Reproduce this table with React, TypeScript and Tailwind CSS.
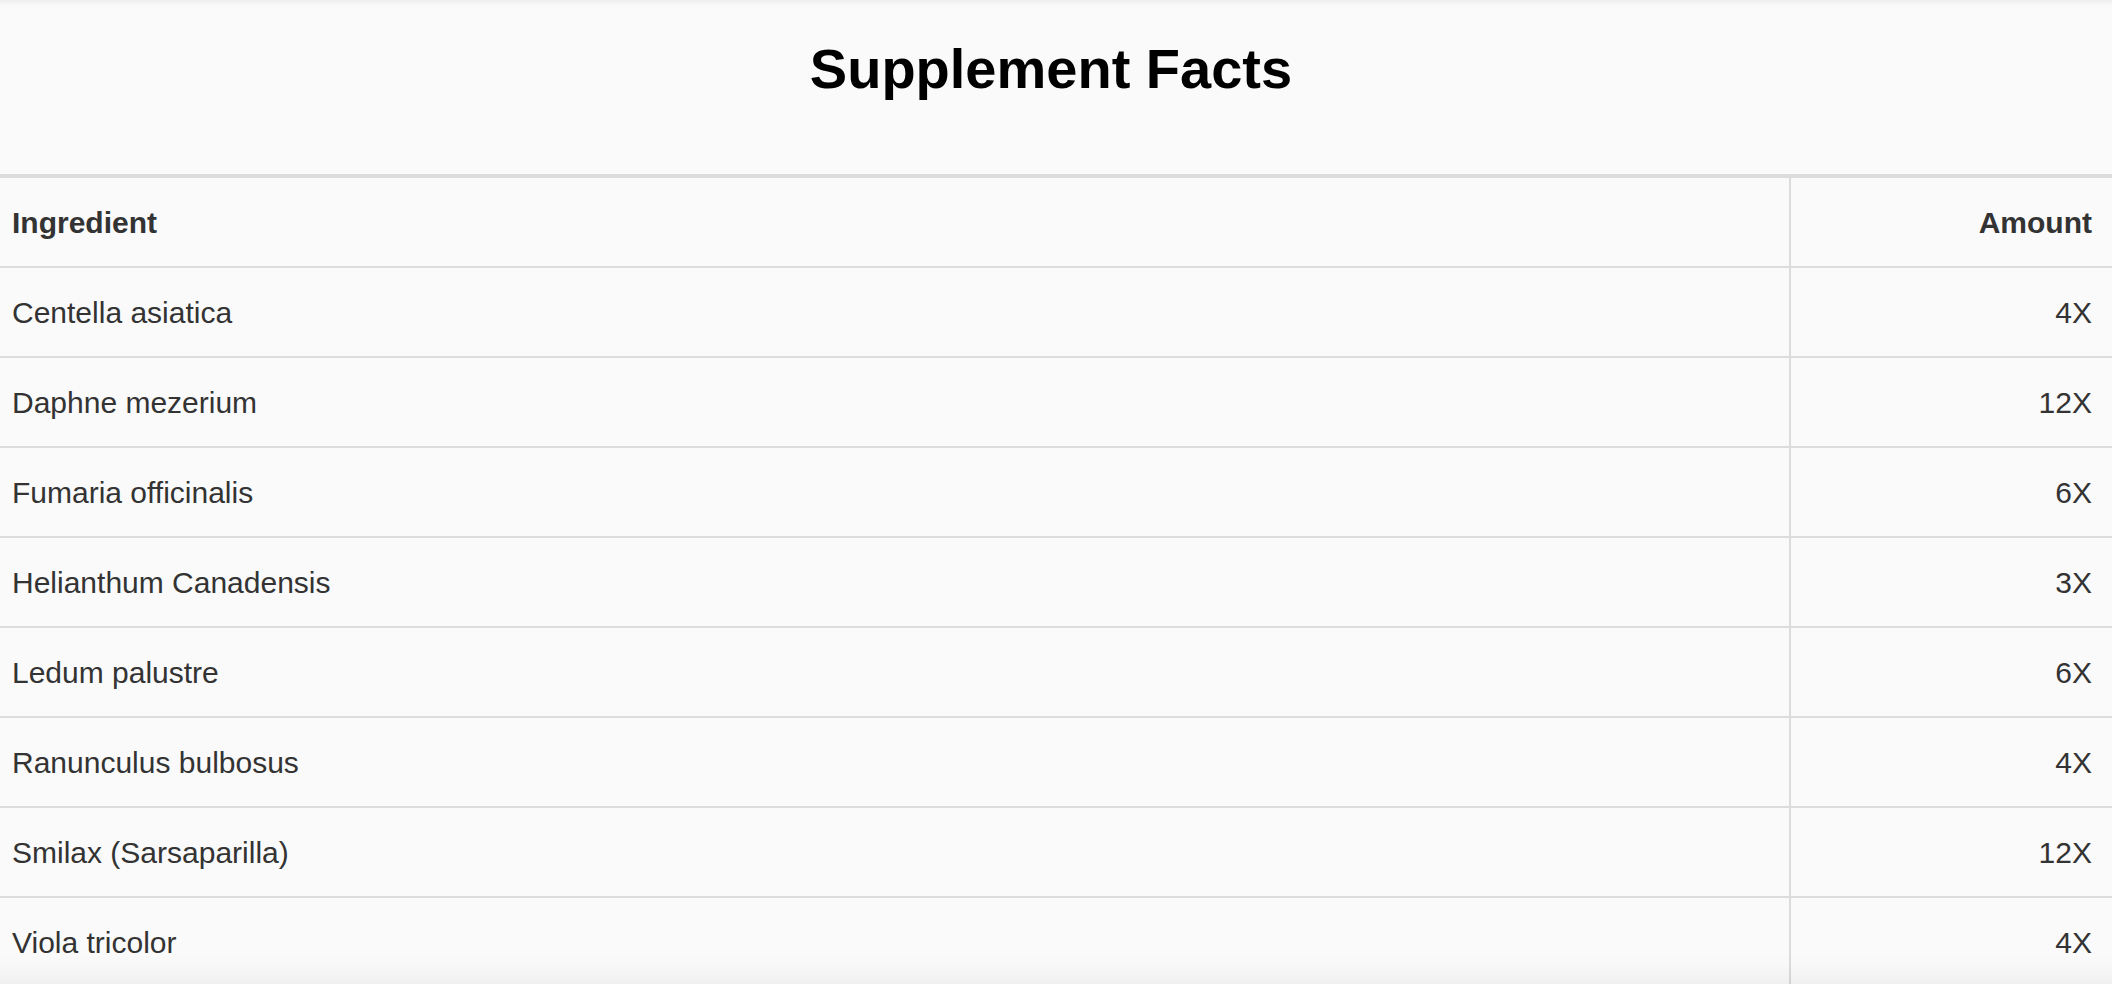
import React from "react";

const rows = [
  { name: "Centella asiatica", amount: "4X" },
  { name: "Daphne mezerium", amount: "12X" },
  { name: "Fumaria officinalis", amount: "6X" },
  { name: "Helianthum Canadensis", amount: "3X" },
  { name: "Ledum palustre", amount: "6X" },
  { name: "Ranunculus bulbosus", amount: "4X" },
  { name: "Smilax (Sarsaparilla)", amount: "12X" },
  { name: "Viola tricolor", amount: "4X" },
];

export default function App() {
  return (
    <div className="relative h-[984px] overflow-hidden bg-[#fafafa] font-['Liberation_Sans',Arial,sans-serif] text-[#333]">
      {/* Title */}
      <div className="h-[174px] pt-[41px] pr-[10px]">
        <h1 className="text-center text-[56px] font-bold leading-none text-black">
          Supplement Facts
        </h1>
      </div>

      {/* Table */}
      <div className="border-t-4 border-[#dcdcdc]">
        <div className="grid grid-cols-[1791px_1fr]">
          <div className="flex h-[90px] items-center border-b-2 border-r-2 border-[#dcdcdc] pl-3 text-[30px] font-bold">
            Ingredient
          </div>
          <div className="flex h-[90px] items-center justify-end border-b-2 border-[#dcdcdc] pr-5 text-[30px] font-bold">
            Amount
          </div>
          {rows.map((r) => (
            <React.Fragment key={r.name}>
              <div className="flex h-[90px] items-center border-b-2 border-r-2 border-[#dcdcdc] pl-3 text-[30px]">
                {r.name}
              </div>
              <div className="flex h-[90px] items-center justify-end border-b-2 border-[#dcdcdc] pr-5 text-[30px]">
                {r.amount}
              </div>
            </React.Fragment>
          ))}
        </div>
      </div>

      {/* viewport edge shading */}
      <div className="pointer-events-none absolute inset-0 shadow-[inset_0_8px_8px_-8px_rgba(0,0,0,0.1),inset_0_-34px_30px_-30px_rgba(0,0,0,0.07)]" />
    </div>
  );
}
